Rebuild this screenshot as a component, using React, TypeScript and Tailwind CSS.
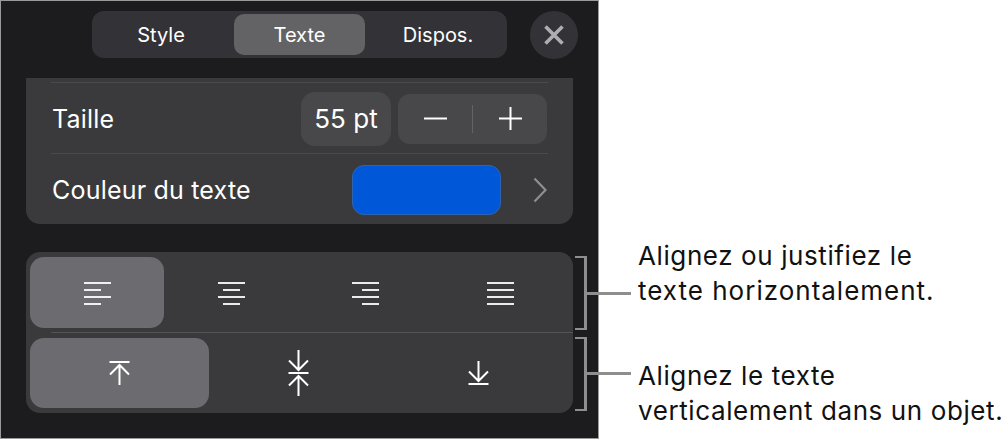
// each entry: [x1, x2] of the 4 stacked lines
const H_ICONS: number[][][] = [
    [[0, 27], [0, 17], [0, 27], [0, 17]],
    [[0, 27], [5, 22], [0, 27], [5, 22]],
    [[0, 27], [10, 27], [0, 27], [10, 27]],
    [[0, 27], [0, 27], [0, 27], [0, 27]],
];
const H_WIDTHS = ["w-[134px]", "w-[134px]", "w-[134px]", "w-[137px]"];

const LinesIcon = ({ lines }: { lines: number[][] }) => (
    <svg width="27" height="24" viewBox="0 0 27 24" stroke="white" strokeWidth="1.8" fill="none">
        {lines.map(([a, b], i) => (
            <line key={i} x1={a} x2={b} y1={2 + i * 7} y2={2 + i * 7} />
        ))}
    </svg>
);

const ArrowTop = () => (
    <svg width="21" height="24" viewBox="0 0 21 24" stroke="white" strokeWidth="2" fill="none">
        <line x1="0.5" x2="20.5" y1="1" y2="1" />
        <path d="M10.5 24V4M1 13.5l9.5-9.5 9.5 9.5" />
    </svg>
);

const ArrowMiddle = () => (
    <svg width="21" height="46" viewBox="0 0 21 46" stroke="white" strokeWidth="2" fill="none">
        <line x1="0.5" x2="20.5" y1="23" y2="23" />
        <path d="M10.5 0v20M1 10.5l9.5 9.5 9.5-9.5M10.5 46V26M1 35.5l9.5-9.5 9.5 9.5" />
    </svg>
);

const ArrowBottom = () => (
    <svg width="21" height="24" viewBox="0 0 21 24" stroke="white" strokeWidth="2" fill="none">
        <line x1="0.5" x2="20.5" y1="23" y2="23" />
        <path d="M10.5 0v20M1 10.5l9.5 9.5 9.5-9.5" />
    </svg>
);

const Callout = ({ className, lineClass }: { className: string; lineClass: string }) => (
    <div className={`absolute left-[575px] w-[12px] border-y-2 border-r-[3px] border-[#8e8e8e] ${className}`}>
        <div className={`absolute left-[9px] w-[47px] h-[3px] bg-[#8e8e8e] ${lineClass}`} />
    </div>
);

export default function App() {
    return (
        <div className="relative flex w-[1008px] h-[439px] bg-white overflow-hidden font-['Inter',sans-serif]">
            {/* panel */}
            <div className="w-[599px] h-[439px] shrink-0 bg-[#1c1c1e] border border-[#9a9a9a] flex flex-col">
                {/* tabs */}
                <div className="flex items-center mt-[10px] ml-[91px] h-[47px]">
                    <div className="flex items-center w-[415px] h-[47px] rounded-[12px] bg-[#333337] text-[20px] text-white">
                        <div className="w-[142px] pr-[4px] text-center">Style</div>
                        <div className="w-[131px] h-[41px] flex items-center justify-center rounded-[10px] bg-[#636366]">Texte</div>
                        <div className="w-[142px] pl-[4px] text-center">Dispos.</div>
                    </div>
                    <div className="ml-[23px] w-[48px] h-[48px] rounded-full bg-[#333337] flex items-center justify-center">
                        <svg width="20" height="20" viewBox="0 0 20 20" stroke="#aeaeb2" strokeWidth="3.6" fill="none">
                            <path d="M1.5 1.5l17 17M18.5 1.5l-17 17" />
                        </svg>
                    </div>
                </div>

                {/* size + colour card */}
                <div className="mt-[20px] mx-[25px] h-[146px] bg-[#3a3a3c] rounded-b-[14px] px-[25px] text-white text-[25px] tracking-[0.2px]">
                    <div className="h-[5px] border-b border-[#4a4a4c]" />
                    <div className="h-[71px] pt-[1px] flex items-center border-b border-[#4a4a4c]">
                        <span className="flex-1 pt-[2px] pl-[1px]">Taille</span>
                        <div className="w-[90px] h-[54px] rounded-[14px] bg-[#48484a] flex items-center justify-center text-[26px] tracking-normal">55 pt</div>
                        <div className="ml-[7px] mr-[1px] w-[149px] h-[50px] rounded-[12px] bg-[#48484a] flex items-center">
                            <div className="flex-1 flex justify-center">
                                <svg width="23" height="23" viewBox="0 0 23 23" stroke="white" strokeWidth="2" fill="none">
                                    <line x1="0" x2="23" y1="11.5" y2="11.5" />
                                </svg>
                            </div>
                            <div className="w-px h-[28px] bg-[#636366]" />
                            <div className="flex-1 flex justify-center">
                                <svg width="23" height="23" viewBox="0 0 23 23" stroke="white" strokeWidth="2" fill="none">
                                    <path d="M0 11.5h23M11.5 0v23" />
                                </svg>
                            </div>
                        </div>
                    </div>
                    <div className="h-[70px] pt-[1px] flex items-center">
                        <span className="flex-1 pt-[2px] pl-[1px]">Couleur du texte</span>
                        <div className="w-[149px] h-[50px] rounded-[12px] bg-[#0058d9] border border-[#2f64b0]" />
                        <svg width="14" height="26" viewBox="0 0 14 26" stroke="#8e8e93" strokeWidth="2.2" fill="none" className="ml-[32px] mr-[1px]">
                            <path d="M1.5 1.5L12.5 13 1.5 24.5" />
                        </svg>
                    </div>
                </div>

                {/* alignment card */}
                <div className="relative mt-[28px] mx-[25px] h-[161px] bg-[#3a3a3c] rounded-[14px]">
                    <div className="flex h-[80px] pt-[5px] px-[4px]">
                        {H_ICONS.map((lines, i) => (
                            <div
                                key={i}
                                className={`${H_WIDTHS[i]} ${i === 0 ? "bg-[#6c6c70] rounded-[14px]" : ""} h-[71px] flex items-center justify-center`}
                            >
                                <LinesIcon lines={lines} />
                            </div>
                        ))}
                    </div>
                    <div className="ml-[25px] h-px bg-[#545456]" />
                    <div className="flex pt-[5px] px-[4px]">
                        <div className="w-[179px] h-[70px] bg-[#6c6c70] rounded-[14px] flex items-center justify-center">
                            <ArrowTop />
                        </div>
                        <div className="w-[178px] h-[70px] flex items-center justify-center">
                            <ArrowMiddle />
                        </div>
                        <div className="w-[182px] h-[70px] flex items-center justify-center">
                            <ArrowBottom />
                        </div>
                    </div>
                </div>
            </div>

            {/* callout brackets */}
            <Callout className="top-[256px] h-[74px]" lineClass="top-[34px]" />
            <Callout className="top-[337px] h-[74px]" lineClass="top-[33px]" />

            {/* captions */}
            <div className="ml-[39px] text-[26px] tracking-[0.6px] leading-[35px] text-[#111] whitespace-nowrap">
                <p className="mt-[238px]">Alignez ou justifiez le<br /><span className="tracking-[1px]">texte horizontalement.</span></p>
                <p className="mt-[50px]">Alignez le texte<br />verticalement dans un objet.</p>
            </div>
        </div>
    );
}
